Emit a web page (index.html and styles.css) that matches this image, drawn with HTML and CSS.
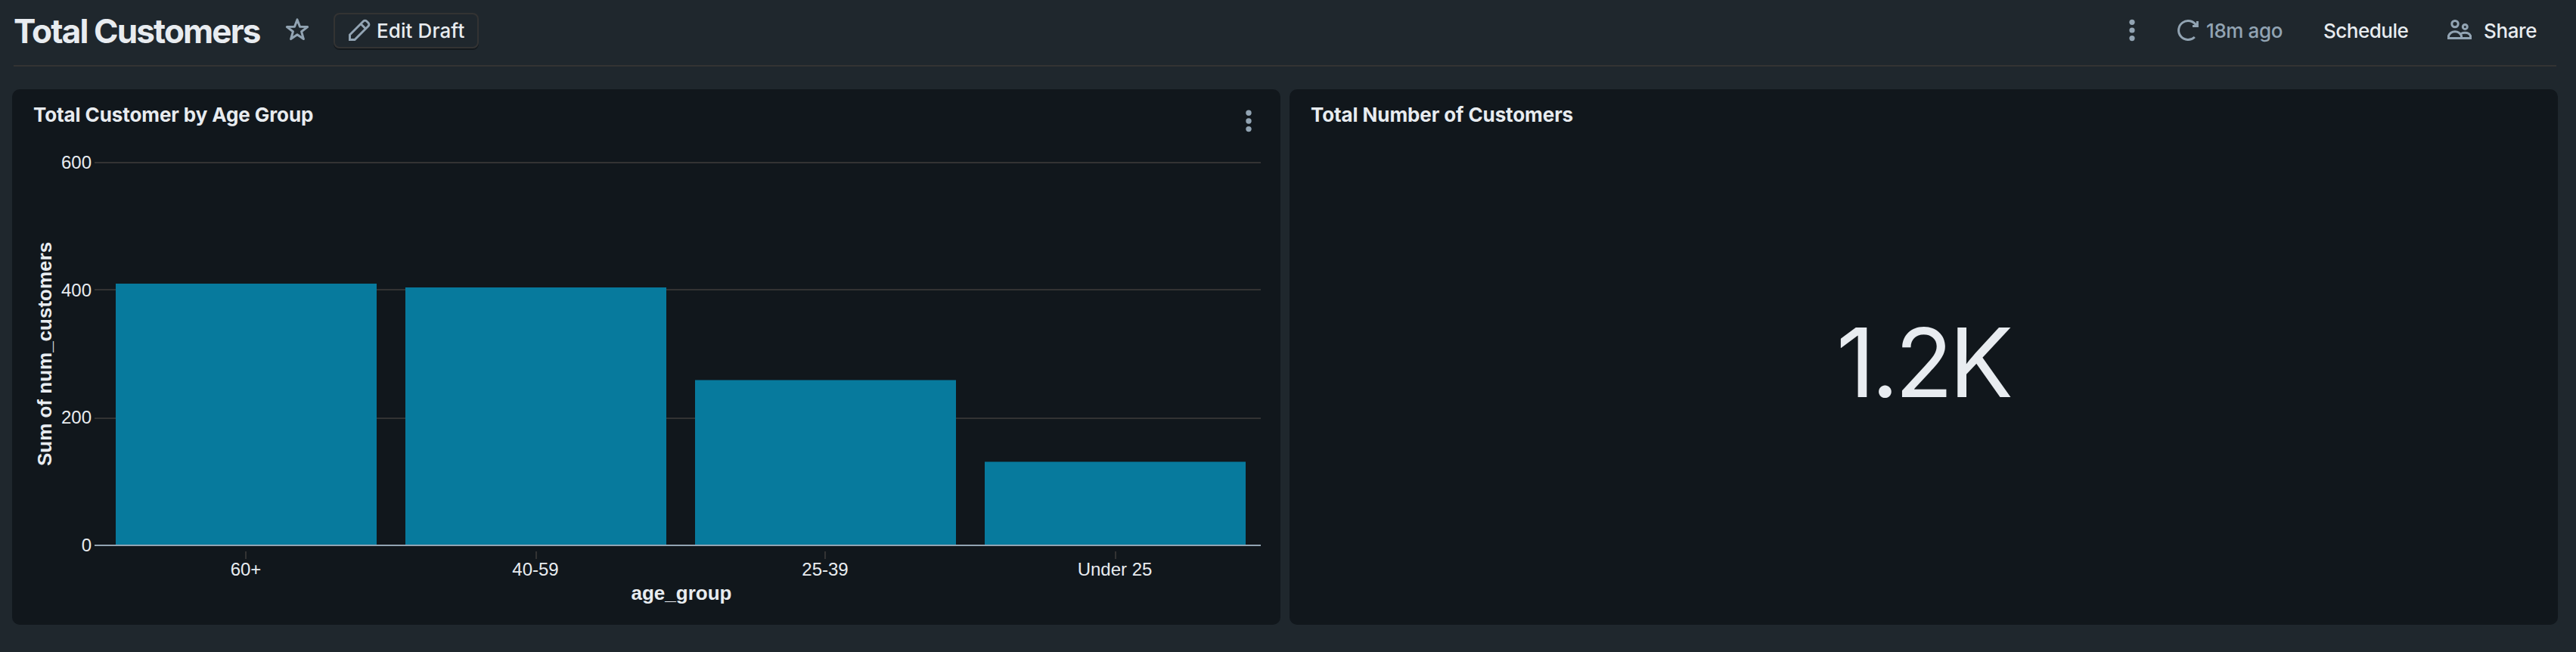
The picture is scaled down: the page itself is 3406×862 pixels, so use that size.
FILE: index.html
```html
<!DOCTYPE html>
<html lang="en">
<head>
<meta charset="utf-8">
<title>Total Customers</title>
<link rel="stylesheet" href="styles.css">
</head>
<body>
<header class="topbar">
  <h1 class="page-title">Total Customers</h1>
  <svg class="icon star" viewBox="0 0 32 32"><path d="M16 1.9l3.5 9.4 10.1.3-8 6.2 2.8 9.8-8.4-5.8-8.4 5.8 2.8-9.8-8-6.2 10.1-.3z"/></svg>
  <button class="edit-btn">
    <svg class="icon" viewBox="0 0 32 32"><path d="M3.5 28.5V22l18-18a3 3 0 0 1 4.2 0L28 6.3a3 3 0 0 1 0 4.2l-18 18zM18 7.5l6.5 6.5"/></svg>
    <span class="label">Edit Draft</span>
  </button>
  <nav class="actions">
    <svg class="icon kebab" viewBox="0 0 32 32"><circle cx="16" cy="5.3" r="3.6"/><circle cx="16" cy="16" r="3.6"/><circle cx="16" cy="26.6" r="3.6"/></svg>
    <span class="action refresh">
      <svg class="icon" viewBox="0 0 32 32"><path d="M24.8 25A12.5 12.5 0 1 1 26.8 9.6M28.4 4v6.4H22"/></svg>
      <span class="label">18m ago</span>
    </span>
    <span class="action schedule"><span class="label">Schedule</span></span>
    <span class="action share">
      <svg class="icon" viewBox="0 0 32 32"><circle cx="10" cy="7.6" r="4.2"/><circle cx="23.3" cy="11.4" r="3"/><path d="M1.500 26.500v-3.200C3.200 19.300 6.500 17.700 10 17.700s6.800 1.600 8.500 5.600v3.200zM18 20.500c1.600-.8 3.400-1.200 5.300-1.200 3.300 0 5.900 1.200 7.200 4v3.200H18.500"/></svg>
      <span class="label">Share</span>
    </span>
  </nav>
</header>
<main class="grid">
  <section class="card">
    <div class="card-head">
      <h2>Total Customer by Age Group</h2>
      <svg class="icon kebab" viewBox="0 0 32 32"><circle cx="16" cy="5.3" r="3.7"/><circle cx="16" cy="16" r="3.7"/><circle cx="16" cy="26.6" r="3.7"/></svg>
    </div>
    <svg class="chart" viewBox="16 190 1677 636">
      <path class="gridline" d="M125 215H1667M125 383H1667M125 553H1667"/>
      <path class="gridline" d="M325 729v10M709 729v10M1091 729v10M1475 729v10"/>
      <g class="bars">
        <rect x="153" y="375" width="345" height="346"/>
        <rect x="536" y="380" width="345" height="341"/>
        <rect x="919" y="502.5" width="345" height="218.5"/>
        <rect x="1302" y="610.5" width="345" height="110.5"/>
      </g>
      <path class="axis" d="M125 721H1667"/>
      <g class="tick end">
        <text x="121" y="223">600</text>
        <text x="121" y="392">400</text>
        <text x="121" y="560">200</text>
        <text x="121" y="729">0</text>
      </g>
      <g class="tick">
        <text x="325" y="761">60+</text>
        <text x="708" y="761">40-59</text>
        <text x="1091" y="761">25-39</text>
        <text x="1474" y="761">Under 25</text>
      </g>
      <text class="axis-title" x="901" y="793">age_group</text>
      <text class="axis-title" transform="translate(68 468) rotate(-90)">Sum of num_customers</text>
    </svg>
  </section>
  <section class="card">
    <div class="card-head"><h2>Total Number of Customers</h2></div>
    <div class="counter">1.2K</div>
  </section>
</main>
</body>
</html>
```

FILE: styles.css
```css
* { box-sizing: border-box; }
body { margin: 0; height: 862px; overflow: hidden; background: #1f272d; color: #e8ecf0; font-family: Inter, sans-serif; font-size: 26px; line-height: 32px; }
h1, h2 { margin: 0; }
.icon { display: block; width: 32px; height: 32px; flex: none; fill: none; stroke: #92a4b3; stroke-width: 3; }
.star { margin: 0 32px 0 0; stroke-linejoin: round; }
.kebab { fill: #92a4b3; stroke: none; }
.label { padding-top: 2px; font-weight: 450; }

.topbar { display: flex; align-items: center; height: 88px; margin: 0 26px 0 18px; padding-bottom: 6px; border-bottom: 2px solid #333; }
.page-title { width: 359px; padding-top: 2px; font-size: 44px; font-weight: 650; line-height: 56px; letter-spacing: -1.85px; white-space: nowrap; }
.edit-btn { display: flex; align-items: center; gap: 7px; width: 192px; height: 47px; padding: 0 0 0 16px; border: 2px solid #333; border-radius: 8px; background: none; color: inherit; font: inherit; letter-spacing: .1px; box-shadow: 0 2px 0 #14191d; white-space: nowrap; }
.actions { display: flex; align-items: center; margin-left: auto; white-space: nowrap; }
.action { display: flex; align-items: center; }
.refresh { width: 143px; margin-left: 42px; gap: 8px; color: #92a4b3; letter-spacing: -.4px; }
.schedule { width: 116px; margin-left: 52px; letter-spacing: -.5px; }
.share { width: 119px; margin-left: 48px; margin-right: 25px; gap: 16px; letter-spacing: -.4px; }

.grid { display: grid; grid-template-columns: 1fr 1fr; gap: 12px; padding: 30px 24px 36px 16px; height: 774px; }
.card { display: flex; flex-direction: column; background: #11171c; border-radius: 10px; overflow: hidden; }
.card-head { display: flex; justify-content: space-between; height: 72px; padding: 18px 26px 0 28px; }
.card-head h2 { font-size: 26px; font-weight: 650; letter-spacing: -.1px; }
.card-head .kebab { margin-top: 8px; }

.chart { display: block; width: 1677px; height: 636px; font-family: "Liberation Sans", Arial, sans-serif; fill: #e8ecf0; }
.gridline { stroke: #333; stroke-width: 2; }
.bars { fill: #077a9d; }
.axis { stroke: #92a4b3; stroke-width: 2; }
.tick { font-size: 24px; text-anchor: middle; }
.end { text-anchor: end; }
.axis-title { font-size: 26px; font-weight: 700; text-anchor: middle; }

.counter { flex: 1; display: flex; align-items: center; justify-content: center; padding: 0 2px 58px 0; font-size: 126px; line-height: 152px; letter-spacing: -5px; }
```
